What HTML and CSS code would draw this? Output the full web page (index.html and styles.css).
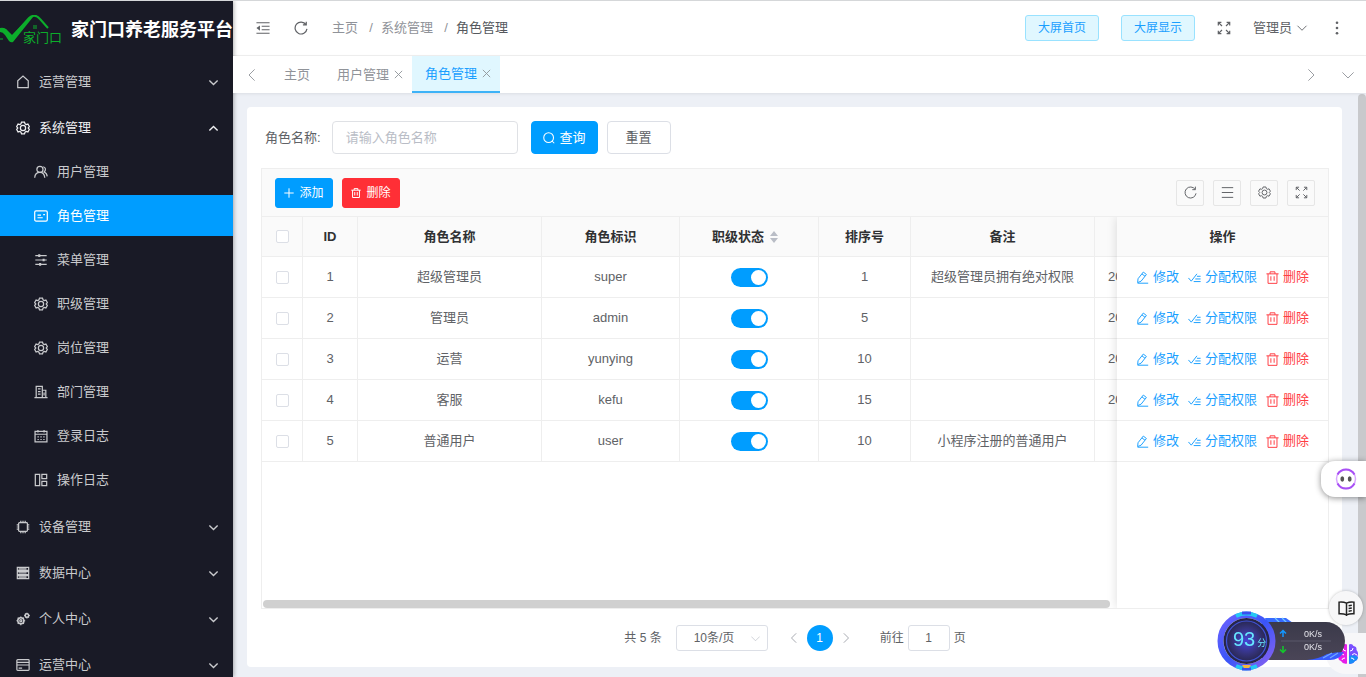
FILE: index.html
```html
<!DOCTYPE html>
<html lang="zh-CN">
<head>
<meta charset="utf-8">
<title>角色管理</title>
<link rel="stylesheet" href="styles.css">
</head>
<body>
<svg class="sprite" aria-hidden="true">
  <symbol id="home" viewBox="0 0 16 16"><path d="M2 14.500V6.500L8 1.200l6 5.300v8z"/></symbol>
  <symbol id="gear" viewBox="0 0 16 16"><path d="M6.300 1.200h3.400l.6 2 1.300.8 2-.5 1.700 2.900-1.400 1.600 1.400 1.600-1.700 2.900-2-.5-1.300.8-.6 2H6.300l-.6-2-1.300-.8-2 .5-1.700-2.900L2.100 8 .7 6.400l1.700-2.900 2 .5 1.300-.8z"/><circle cx="8" cy="8" r="3"/></symbol>
  <symbol id="user" viewBox="0 0 16 16"><circle cx="6.800" cy="5" r="3.500"/><path d="M.8 14.500C1 11 3 8.500 6.800 8.500s5.200 2.500 5.500 6M10.500 2c3 .5 3.500 4.200 1 6 2 .8 3.400 2.500 3.600 5"/></symbol>
  <symbol id="card" viewBox="0 0 16 16"><rect x=".8" y="2.200" width="14.400" height="11.600" rx="1.500"/><path d="M4 7h4M4 10h6M10.500 6.500h2"/></symbol>
  <symbol id="sliders" viewBox="0 0 16 16"><path d="M1.500 3h13M1.500 8h13M1.500 13h13"/><path stroke-width="2.400" d="M6 1.500v3M11 6.500v3M7 11.500v3"/></symbol>
  <symbol id="office" viewBox="0 0 16 16"><path d="M.5 14.500h15M2.500 14.500v-13h7v13M9.500 6h4v8.500M4.500 4.500h3M4.500 7.500h3M4.500 10.500h3M11.500 8.500v3.500"/></symbol>
  <symbol id="calendar" viewBox="0 0 16 16"><path d="M1.200 2.800h13.600v12H1.200zM1.200 6h13.600M4.500 1v3M11.500 1v3M4 9h1.500M7.300 9h1.500M10.600 9h1.500M4 12h1.500M7.300 12h1.500M10.600 12h1.500"/></symbol>
  <symbol id="board" viewBox="0 0 16 16"><path d="M1.500 1.500h5v13h-5zM9 1.500h5.500v5H9zM9 9.500h5.500v5H9z"/></symbol>
  <symbol id="cpu" viewBox="0 0 16 16"><rect x="3" y="3" width="10" height="10" rx="1"/><path d="M5.500 3V.8M8 3V.8M10.500 3V.8M5.500 15.200V13M8 15.200V13M10.500 15.200V13M.8 5.500H3M.8 8H3M.8 10.500H3M13 5.500h2.200M13 8h2.200M13 10.500h2.200"/></symbol>
  <symbol id="data" viewBox="0 0 16 16"><path d="M1.500 1.500h13v3.500h-13zM1.500 6.300h13v3.500h-13zM1.500 11h13v3.500h-13zM3 3.300h9M3 8h9M3 12.800h9"/></symbol>
  <symbol id="cogs" viewBox="0 0 16 16"><circle cx="5.500" cy="10" r="3.500" stroke-width="1.800"/><circle cx="5.500" cy="10" r="1.200"/><circle cx="12.500" cy="4" r="2" stroke-width="1.800"/><path d="M5.500 5v1.500M5.500 13.500V15M.5 10H2M9 10h1.500M2 6.500l1 1M8 12.500l1 1M2 13.500l1-1M8 7.500l1-1M12.500.8V2M12.500 6v1.300M9.300 4h1.200M14.500 4h1.300M10.300 1.800l.8.8M14 5.500l.8.8"/></symbol>
  <symbol id="bill" viewBox="0 0 16 16"><rect x="1" y="1.800" width="14" height="12.400" rx="1"/><path d="M1 5h14M1 8h14M3 11.500h4"/></symbol>
  <symbol id="down" viewBox="0 0 16 16"><path d="M2 5l6 6 6-6"/></symbol>
  <symbol id="up" viewBox="0 0 16 16"><path d="M2 11l6-6 6 6"/></symbol>
  <symbol id="left" viewBox="0 0 16 16"><path d="M11.500.5L4 8l7.500 7.500"/></symbol>
  <symbol id="right" viewBox="0 0 16 16"><path d="M4.500.5L12 8l-7.500 7.500"/></symbol>
  <symbol id="wide-down" viewBox="0 0 16 16"><path d="M.5 4.500L8 12l7.500-7.500"/></symbol>
  <symbol id="close" viewBox="0 0 16 16"><path d="M1.500 1.500l13 13M14.500 1.500l-13 13"/></symbol>
  <symbol id="fold" viewBox="0 0 16 16"><path d="M.5 2h15M6.500 6h9M6.500 10h9M.5 14h15"/><path class="solid" d="M.5 8l4-3v6z"/></symbol>
  <symbol id="reload" viewBox="0 0 16 16"><path d="M13.700 4.200A6.800 6.800 0 1 0 14.800 9M14 .8v3.700h-3.800"/></symbol>
  <symbol id="full" viewBox="0 0 16 16"><path d="M1.500 5V1.500H5M1.500 1.500l4.200 4.200M11 1.500h3.500V5M14.500 1.500l-4.200 4.200M1.500 11v3.500H5M1.500 14.500l4.200-4.200M11 14.500h3.500V11M14.500 14.500l-4.200-4.200"/></symbol>
  <symbol id="more" viewBox="0 0 16 16"><g class="solid"><circle cx="8" cy="2" r="1.500"/><circle cx="8" cy="8" r="1.500"/><circle cx="8" cy="14" r="1.500"/></g></symbol>
  <symbol id="search" viewBox="0 0 16 16"><circle cx="7.500" cy="7.500" r="6.500"/><path d="M12 12l3 3"/></symbol>
  <symbol id="plus" viewBox="0 0 16 16"><path d="M8 .5v15M.5 8h15"/></symbol>
  <symbol id="trash" viewBox="0 0 16 16"><path d="M.5 3.500h15M5 3.500V1h6v2.500M2.500 3.500v11.700h11V3.500M6 6.500v5.500M10 6.500v5.500"/></symbol>
  <symbol id="lines" viewBox="0 0 16 16"><path d="M1 2h14M1 8h14M1 14h14"/></symbol>
  <symbol id="edit" viewBox="0 0 16 16"><path d="M2.500 9.500L9 1.300l3.800 3L6.300 12.500l-4.300 1.800zM7.300 3.500l3.800 3M2 15h13"/></symbol>
  <symbol id="assign" viewBox="0 0 16 16"><path d="M.5 8.500L4 12.500 11 3.500M11 6.500h4.500M9 9.800h6.500M7 13h8.500"/></symbol>
</svg>

<aside class="sidebar">
  <div class="brand">
    <svg class="brand-mark" viewBox="0 0 63 30" aria-hidden="true">
      <path d="M0 14q5-1 7 3l5 5L29 3q6-5 11 1l8 9" fill="none" stroke="#0cae2b" stroke-width="2"/>
      <path d="M0 14q5-2 8 2l4 4L31 1l2 1-20 25q-2 1-4-1l-4-6q-2-3-5-3z" fill="#0cae2b"/>
      <path d="M0 24h3M33 11h4M33 13h4" stroke="#0cae2b" stroke-width="1"/>
      <text x="23" y="27" fill="#0cae2b" font-size="13">家门口</text>
    </svg>
    <span class="brand-name">家门口养老服务平台</span>
  </div>
  <nav class="menu">
    <a class="item" href="#"><svg class="ico"><use href="#home"/></svg>运营管理<svg class="arrow"><use href="#down"/></svg></a>
    <a class="item open" href="#"><svg class="ico"><use href="#gear"/></svg>系统管理<svg class="arrow"><use href="#up"/></svg></a>
    <div class="submenu">
      <a class="sub" href="#"><svg class="ico"><use href="#user"/></svg>用户管理</a>
      <a class="sub active" href="#"><svg class="ico"><use href="#card"/></svg>角色管理</a>
      <a class="sub" href="#"><svg class="ico"><use href="#sliders"/></svg>菜单管理</a>
      <a class="sub" href="#"><svg class="ico"><use href="#gear"/></svg>职级管理</a>
      <a class="sub" href="#"><svg class="ico"><use href="#gear"/></svg>岗位管理</a>
      <a class="sub" href="#"><svg class="ico"><use href="#office"/></svg>部门管理</a>
      <a class="sub" href="#"><svg class="ico"><use href="#calendar"/></svg>登录日志</a>
      <a class="sub" href="#"><svg class="ico"><use href="#board"/></svg>操作日志</a>
    </div>
    <a class="item" href="#"><svg class="ico"><use href="#cpu"/></svg>设备管理<svg class="arrow"><use href="#down"/></svg></a>
    <a class="item" href="#"><svg class="ico"><use href="#data"/></svg>数据中心<svg class="arrow"><use href="#down"/></svg></a>
    <a class="item" href="#"><svg class="ico"><use href="#cogs"/></svg>个人中心<svg class="arrow"><use href="#down"/></svg></a>
    <a class="item" href="#"><svg class="ico"><use href="#bill"/></svg>运营中心<svg class="arrow"><use href="#down"/></svg></a>
  </nav>
</aside>

<div class="main">
  <header class="header">
    <button class="plain" aria-label="折叠菜单"><svg class="ico"><use href="#fold"/></svg></button>
    <button class="plain" aria-label="刷新"><svg class="ico"><use href="#reload"/></svg></button>
    <nav class="crumbs"><a href="#">主页</a><i>/</i><a href="#">系统管理</a><i>/</i><span>角色管理</span></nav>
    <div class="header-right">
      <button class="tint">大屏首页</button>
      <button class="tint">大屏显示</button>
      <button class="plain" aria-label="全屏"><svg class="ico"><use href="#full"/></svg></button>
      <button class="plain account">管理员<svg class="chev"><use href="#down"/></svg></button>
      <button class="plain" aria-label="更多"><svg class="ico"><use href="#more"/></svg></button>
    </div>
  </header>

  <nav class="tabs">
    <button class="plain tab-nav" aria-label="向左"><svg class="chev"><use href="#left"/></svg></button>
    <a class="tab" href="#">主页</a>
    <a class="tab" href="#">用户管理<svg class="x"><use href="#close"/></svg></a>
    <a class="tab current" href="#">角色管理<svg class="x"><use href="#close"/></svg></a>
    <span class="grow"></span>
    <button class="plain tab-nav" aria-label="向右"><svg class="chev"><use href="#right"/></svg></button>
    <button class="plain tab-nav" aria-label="标签菜单"><svg class="chev"><use href="#wide-down"/></svg></button>
  </nav>

  <div class="content">
    <main class="panel">
      <form class="search">
        <label for="role-name">角色名称:</label>
        <input id="role-name" type="text" placeholder="请输入角色名称">
        <button type="button" class="btn primary"><svg><use href="#search"/></svg>查询</button>
        <button type="reset" class="btn">重置</button>
      </form>

      <section class="grid">
        <div class="toolbar">
          <button class="btn small primary"><svg><use href="#plus"/></svg>添加</button>
          <button class="btn small danger"><svg><use href="#trash"/></svg>删除</button>
          <span class="grow"></span>
          <button class="tool" aria-label="刷新"><svg><use href="#reload"/></svg></button>
          <button class="tool" aria-label="密度"><svg><use href="#lines"/></svg></button>
          <button class="tool" aria-label="列设置"><svg><use href="#gear"/></svg></button>
          <button class="tool" aria-label="全屏"><svg><use href="#full"/></svg></button>
        </div>
        <div class="table-wrap">
          <table>
            <colgroup><col class="c-check"><col class="c-id"><col class="c-name"><col class="c-code"><col class="c-state"><col class="c-sort"><col class="c-note"><col class="c-time"><col class="c-ops"></colgroup>
            <thead>
              <tr><th><input type="checkbox" class="check" aria-label="全选"></th><th>ID</th><th>角色名称</th><th>角色标识</th><th class="sortable">职级状态<svg class="sort" viewBox="0 0 8 12" aria-hidden="true"><path d="M0 5l4-5 4 5zM0 7l4 5 4-5z"/></svg></th><th>排序号</th><th>备注</th><th></th><th class="fixed">操作</th></tr>
            </thead>
            <tbody>
              <tr><td><input type="checkbox" class="check" aria-label="选择 1"></td><td>1</td><td>超级管理员</td><td>super</td><td><input type="checkbox" role="switch" class="switch" aria-label="状态 1" checked></td><td>1</td><td>超级管理员拥有绝对权限</td><td class="time">20</td><td class="fixed"><div class="ops"><a href="#"><svg><use href="#edit"/></svg>修改</a><a href="#"><svg><use href="#assign"/></svg>分配权限</a><a class="del" href="#"><svg><use href="#trash"/></svg>删除</a></div></td></tr>
              <tr><td><input type="checkbox" class="check" aria-label="选择 2"></td><td>2</td><td>管理员</td><td>admin</td><td><input type="checkbox" role="switch" class="switch" aria-label="状态 2" checked></td><td>5</td><td></td><td class="time">20</td><td class="fixed"><div class="ops"><a href="#"><svg><use href="#edit"/></svg>修改</a><a href="#"><svg><use href="#assign"/></svg>分配权限</a><a class="del" href="#"><svg><use href="#trash"/></svg>删除</a></div></td></tr>
              <tr><td><input type="checkbox" class="check" aria-label="选择 3"></td><td>3</td><td>运营</td><td>yunying</td><td><input type="checkbox" role="switch" class="switch" aria-label="状态 3" checked></td><td>10</td><td></td><td class="time">20</td><td class="fixed"><div class="ops"><a href="#"><svg><use href="#edit"/></svg>修改</a><a href="#"><svg><use href="#assign"/></svg>分配权限</a><a class="del" href="#"><svg><use href="#trash"/></svg>删除</a></div></td></tr>
              <tr><td><input type="checkbox" class="check" aria-label="选择 4"></td><td>4</td><td>客服</td><td>kefu</td><td><input type="checkbox" role="switch" class="switch" aria-label="状态 4" checked></td><td>15</td><td></td><td class="time">20</td><td class="fixed"><div class="ops"><a href="#"><svg><use href="#edit"/></svg>修改</a><a href="#"><svg><use href="#assign"/></svg>分配权限</a><a class="del" href="#"><svg><use href="#trash"/></svg>删除</a></div></td></tr>
              <tr><td><input type="checkbox" class="check" aria-label="选择 5"></td><td>5</td><td>普通用户</td><td>user</td><td><input type="checkbox" role="switch" class="switch" aria-label="状态 5" checked></td><td>10</td><td>小程序注册的普通用户</td><td></td><td class="fixed"><div class="ops"><a href="#"><svg><use href="#edit"/></svg>修改</a><a href="#"><svg><use href="#assign"/></svg>分配权限</a><a class="del" href="#"><svg><use href="#trash"/></svg>删除</a></div></td></tr>
            </tbody>
          </table>
          <div class="hbar"></div>
        </div>
      </section>

      <footer class="pager">
        <span>共 5 条</span>
        <span class="size"><select aria-label="每页条数"><option>10条/页</option><option>20条/页</option></select><svg><use href="#wide-down"/></svg></span>
        <span class="pages">
          <button class="plain" aria-label="上一页"><svg><use href="#left"/></svg></button>
          <button class="page">1</button>
          <button class="plain" aria-label="下一页"><svg><use href="#right"/></svg></button>
        </span>
        <label class="jump">前往<input type="text" value="1">页</label>
      </footer>
    </main>
    <div class="vbar"></div>
  </div>
</div>

<button class="float robot" aria-label="助手">
  <svg viewBox="0 0 22 22"><circle cx="11" cy="11" r="9.500" fill="#fff" stroke="#d9a6ff" stroke-width="1.500"/><path d="M2.500 6.500a9.700 9.700 0 0 1 17 0M2.500 15.500a9.700 9.700 0 0 0 17 0" fill="none" stroke="#a850f5" stroke-width="2"/><ellipse cx="7.300" cy="11" rx="1.900" ry="2.700" fill="#555"/><ellipse cx="14.700" cy="11" rx="1.900" ry="2.700" fill="#555"/></svg>
</button>
<button class="float brain" aria-label="智能分析">
  <svg viewBox="0 0 22 22"><path d="M10 1.500Q7 0 5.500 3 2 3.500 2.500 7 0 10 1.500 13 .5 17 4 18q2 3.500 6 2.500z" fill="#e51ee8"/><path d="M12 1.500Q15 0 16.500 3q3.500.5 3 4 2.500 3 1 6 1 4-2.500 5-2 3.500-6 2.500z" fill="#7a50ff"/><path d="M12 13q5-2 9 1-1 4-3 4-2 3.500-6 2.500z" fill="#188cf8"/><path d="M2 12q3-3 5 0M6 5q0 3 3 3M5 17q0-2 3-2M20 12q-3-3-5 0M16 5q0 3-3 3M17 17q0-2-3-2" fill="none" stroke="#fff" stroke-width="1"/></svg>
</button>
<button class="float book" aria-label="文档">
  <svg viewBox="0 0 16 16"><path d="M8 3Q5 1.500 1 2v11q4-.3 7 1 3-1.300 7-1V2q-4-.5-7 1zM8 3v12M10 5.500l3-.5M10 8l3-.5M10 10.500l3-.5" fill="none" stroke="#222" stroke-width="1.400"/></svg>
</button>
<div class="float monitor">
  <svg class="monitor-bg" viewBox="0 0 132 60" aria-hidden="true">
    <defs>
      <linearGradient id="ring" x1="0" y1="0" x2="1" y2="1"><stop offset="0" stop-color="#6d63ff"/><stop offset=".5" stop-color="#3a55f8"/><stop offset="1" stop-color="#8a62f0"/></linearGradient>
      <radialGradient id="core"><stop offset="0" stop-color="#4544d8"/><stop offset=".6" stop-color="#343278"/><stop offset="1" stop-color="#242342"/></radialGradient>
      <linearGradient id="pill" x1="0" y1="0" x2="0" y2="1"><stop offset="0" stop-color="#3b3a4a"/><stop offset="1" stop-color="#4a4557"/></linearGradient>
    </defs>
    <path d="M48 7h21l7 5H50z" fill="#376bff"/><path d="M58 7l5 5M65 7l5 5" fill="none" stroke="#70c4ff"/>
    <rect x="34" y="11" width="94" height="38" rx="19" fill="url(#pill)"/>
    <path d="M64 30h50" stroke="#5b586b"/>
    <path d="M90 49q12-1 20-6 9-2 17-2-5 8-14 8z" fill="#385cff"/><path d="M106 47l9-5M113 47l8-5" fill="none" stroke="#72a9ff"/>
    <circle cx="29.500" cy="30" r="26" fill="none" stroke="url(#ring)" stroke-width="6"/>
    <path d="M19 5q10-5 21 0M19 55q10 5 21 0" fill="none" stroke="#25c8f4" stroke-width="4"/>
    <path d="M25 2h9M25 58h9" stroke="#3a4ff0" stroke-width="3"/>
    <circle cx="29.500" cy="30" r="23" fill="url(#core)"/>
    <circle cx="29.500" cy="30" r="20" fill="none" stroke="#4054d8"/>
    <path d="M25 54h9l-2 3h-5z" fill="#f2b640"/>
    <path d="M66 26v-6M63 22.500l3-3 3 3" fill="none" stroke="#1397ff" stroke-width="1.500"/>
    <path d="M66 35v6M63 38.500l3 3 3-3" fill="none" stroke="#13c72c" stroke-width="1.500"/>
  </svg>
  <div class="score"><b>93</b><small>分</small></div>
  <div class="speed"><span>0K/s</span><span>0K/s</span></div>
</div>
</body>
</html>
```
FILE: styles.css
```css
* { box-sizing: border-box; }
body {
  margin: 0;
  height: 100vh;
  display: flex;
  overflow: hidden;
  background: #edf0f6;
  border-top: 1px solid #d5d7d9;
  font: 13px/20px "Liberation Sans", "Noto Sans CJK SC", sans-serif;
  color: #606266;
}
a { color: inherit; text-decoration: none; }
button, input, select { font: inherit; color: inherit; }
svg { fill: none; stroke: currentColor; stroke-width: 1.2; flex: none; }
.solid { fill: currentColor; stroke: none; }
.sprite { position: absolute; width: 0; height: 0; }
.grow { flex: 1; }
.ico { width: 14px; height: 14px; }
.chev { width: 12px; height: 12px; }
.plain { display: flex; align-items: center; padding: 0; border: 0; background: none; }

.sidebar {
  width: 233px;
  flex: none;
  overflow: hidden;
  background: #191a26;
  color: #c9cacd;
  box-shadow: 1px 0 4px rgba(0, 0, 0, .3);
  z-index: 1;
}
.sidebar .ico { stroke-width: 1.4; }
.brand { display: flex; align-items: center; gap: 8px; height: 58px; }
.brand-mark { width: 63px; height: 30px; stroke: none; }
.brand-name { color: #fff; font-size: 18px; font-weight: 700; white-space: nowrap; }
.item { display: flex; align-items: center; gap: 9px; height: 46px; padding: 0 14px 0 16px; }
.item.open { color: #f0f0f2; }
.arrow { width: 11px; height: 11px; margin-left: auto; stroke-width: 2; }
.submenu { display: flex; flex-direction: column; gap: 3px; padding-bottom: 4px; }
.sub { display: flex; align-items: center; gap: 9px; height: 41px; padding-left: 34px; }
.sub.active { background: #009dff; color: #fff; }

.main { flex: 1; min-width: 0; display: flex; flex-direction: column; }
.header {
  display: flex;
  align-items: center;
  gap: 24px;
  height: 55px;
  padding: 0 22px 0 23px;
  background: #fff;
  border-bottom: 1px solid #f0f0f0;
}
.header .ico { stroke-width: 1.4; }
.crumbs { display: flex; color: #909399; }
.crumbs i { width: 23px; padding-left: 3px; text-align: center; font-style: normal; }
.crumbs span { color: #55585d; }
.header-right { display: flex; align-items: center; gap: 22px; margin-left: auto; }
.tint {
  height: 26px;
  padding: 0 12px;
  border: 1px solid #99e2ff;
  border-radius: 3px;
  background: #e0f7ff;
  color: #1a9fff;
  font-size: 12px;
}
.account { gap: 4px; }

.tabs { display: flex; align-items: stretch; height: 37px; background: #fff; box-shadow: 0 1px 3px rgba(0, 0, 0, .08); z-index: 1; }
.tab-nav { justify-content: center; width: 37px; color: #909399; }
.tab { display: flex; align-items: center; gap: 5px; padding: 0 14px; color: #909399; }
.tab:has(.x) { padding: 0 9px 0 13px; }
.tab.current { background: #e0f7ff; color: #1a9fff; border-bottom: 2px solid #3db2f7; }
.x { width: 9px; height: 9px; color: #8f9499; stroke-width: 1.6; }

.content { flex: 1; display: flex; min-height: 0; }
.panel {
  flex: 1;
  min-width: 0;
  display: flex;
  flex-direction: column;
  margin: 14px 16px 10px 14px;
  padding: 14px 13px 0 14px;
  background: #fff;
  border-radius: 4px;
}
.vbar { width: 8px; margin-top: 1px; background: #c8c9cc; border-radius: 4px 4px 0 0; }

.search { display: flex; align-items: center; padding-left: 4px; }
.search label { margin-right: 11px; }
.search input { width: 186px; height: 33px; margin-right: 13px; padding: 0 13px; border: 1px solid #dfe1e5; border-radius: 4px; }
.search input::placeholder { color: #b9bdc6; }
.btn {
  display: flex;
  align-items: center;
  justify-content: center;
  gap: 5px;
  width: 64px;
  height: 33px;
  padding: 0;
  border: 1px solid #dcdfe6;
  border-radius: 4px;
  background: #fff;
}
.btn svg { width: 12px; height: 12px; stroke-width: 1.4; }
.btn.primary { width: 67px; margin-right: 9px; border-color: #009dff; background: #009dff; color: #fff; }
.btn.small { width: 58px; height: 30px; font-size: 12px; border-radius: 3px; }
.btn.small svg { width: 10px; height: 10px; stroke-width: 1.6; }
.btn.danger { border-color: #ff2f36; background: #ff2f36; color: #fff; }

.grid { flex: 1; min-height: 0; display: flex; flex-direction: column; margin-top: 14px; border: 1px solid #eee; }
.toolbar { display: flex; align-items: center; height: 48px; padding: 0 13px; background: #fafafa; border-bottom: 1px solid #eee; }
.tool { display: grid; place-items: center; width: 28px; height: 26px; margin-left: 9px; padding: 0; border: 1px solid #e6e6e6; border-radius: 2px; background: none; }
.tool svg { width: 13px; height: 13px; }

.table-wrap { flex: 1; position: relative; overflow: hidden; }
.table-wrap::after { content: ""; position: absolute; inset: 0 0 0 auto; width: 211px; box-shadow: 0 0 10px rgba(0, 0, 0, .14); pointer-events: none; }
table { width: 100%; min-width: 1205px; table-layout: fixed; border-collapse: separate; border-spacing: 0; text-align: center; }
.c-check { width: 41px; }
.c-id { width: 55px; }
.c-name, .c-note { width: 184px; }
.c-code { width: 138px; }
.c-state { width: 139px; }
.c-sort { width: 92px; }
.c-ops { width: 211px; }
th, td { height: 41px; padding: 0; border-right: 1px solid #eee; border-bottom: 1px solid #eee; background: #fff; }
th { height: 40px; background: #fafafa; color: #303133; }
th.sortable { padding-right: 8px; }
.fixed { position: sticky; right: 0; border-right: 0; }
.time { padding-left: 13px; text-align: left; }
.check { display: block; appearance: none; width: 13px; height: 13px; margin: 0 auto; border: 1px solid #dcdfe6; border-radius: 2px; background: #fff; }
.switch { display: block; appearance: none; width: 37px; height: 19px; margin: 0 auto; padding: 2px; border-radius: 10px; background: #009dff; }
.switch::before { content: ""; display: block; width: 15px; height: 15px; margin-left: auto; border-radius: 50%; background: #fff; }
.sort { width: 8px; height: 12px; margin-left: 6px; vertical-align: -2px; fill: #b9bdc6; stroke: none; }
.ops { display: flex; justify-content: center; gap: 9px; color: #1a9fff; }
.ops a { display: flex; align-items: center; gap: 4px; }
.ops svg { width: 13px; height: 13px; }
.ops .del { color: #ff3d43; }
.hbar { position: absolute; left: 1px; bottom: 0; right: 218px; height: 8px; border-radius: 4px; background: #d0d0d0; }

.pager { display: flex; align-items: center; justify-content: center; height: 58px; font-size: 12px; }
.size { position: relative; margin-left: 14px; }
.size select { appearance: none; width: 92px; height: 26px; padding: 0 17px; border: 1px solid #dcdfe6; border-radius: 3px; background: #fff; }
.size svg { position: absolute; right: 8px; top: 9px; width: 9px; height: 9px; color: #b9bdc6; }
.pages { display: flex; align-items: center; gap: 8px; margin: 0 29px 0 21px; }
.pages svg { width: 10px; height: 10px; color: #a8abb2; stroke-width: 1.6; }
.page { width: 26px; height: 26px; padding: 0; border: 0; border-radius: 50%; background: #009dff; color: #fff; }
.jump { display: flex; align-items: center; gap: 4px; }
.jump input { width: 42px; height: 26px; padding: 0; border: 1px solid #dcdfe6; border-radius: 3px; text-align: center; }

.float { position: fixed; z-index: 2; padding: 0; border: 0; background: #fff; }
.float svg { stroke: none; }
.robot { right: 0; bottom: 180px; width: 45px; height: 36px; padding: 6px 0 0 4px; border-radius: 14px 0 0 14px; box-shadow: 0 1px 6px rgba(0, 0, 0, .45); }
.robot svg { width: 22px; height: 22px; }
.brain { right: 0; bottom: 3px; width: 40px; height: 41px; padding-left: 4px; border-radius: 20px 0 0 20px; background: #f7f7f9; }
.brain svg { width: 22px; height: 22px; margin-top: 6px; }
.book { right: 3px; bottom: 52px; display: grid; place-items: center; width: 34px; height: 34px; border-radius: 50%; background: #f7f7f8; box-shadow: 0 0 3px rgba(0, 0, 0, .25); }
.book svg { width: 17px; height: 17px; }
.monitor { right: 17px; bottom: 6px; width: 132px; height: 60px; background: none; }
.monitor-bg { display: block; width: 132px; height: 60px; }
.score { position: absolute; left: 16px; top: 16px; display: flex; align-items: baseline; gap: 2px; color: #67e6ff; }
.score b { font: 20px/24px "Liberation Sans", sans-serif; }
.score small { font-size: 9px; }
.speed { position: absolute; left: 87px; top: 17px; display: grid; color: #e4e4ea; font: 9px/13px "Liberation Sans", sans-serif; }
```
